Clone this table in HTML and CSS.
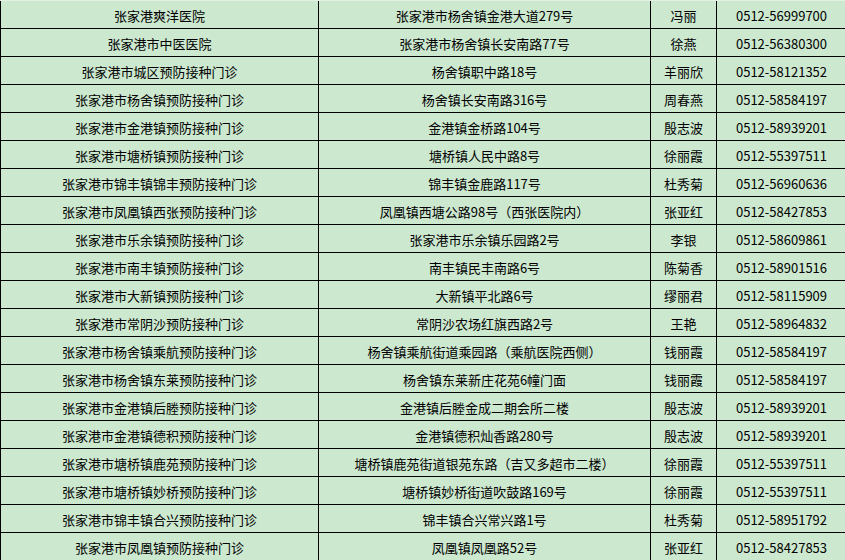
FILE: index.html
```html
<!DOCTYPE html>
<html lang="zh-CN">
<head>
<meta charset="utf-8">
<title>张家港预防接种门诊</title>
<link rel="stylesheet" href="styles.css">
</head>
<body>
<div class="sheet">
  <div class="cell">张家港爽洋医院</div><div class="cell">张家港市杨舍镇金港大道279号</div><div class="cell">冯丽</div><div class="cell">0512-56999700</div>
  <div class="cell">张家港市中医医院</div><div class="cell">张家港市杨舍镇长安南路77号</div><div class="cell">徐燕</div><div class="cell">0512-56380300</div>
  <div class="cell">张家港市城区预防接种门诊</div><div class="cell">杨舍镇职中路18号</div><div class="cell">羊丽欣</div><div class="cell">0512-58121352</div>
  <div class="cell">张家港市杨舍镇预防接种门诊</div><div class="cell">杨舍镇长安南路316号</div><div class="cell">周春燕</div><div class="cell">0512-58584197</div>
  <div class="cell">张家港市金港镇预防接种门诊</div><div class="cell">金港镇金桥路104号</div><div class="cell">殷志波</div><div class="cell">0512-58939201</div>
  <div class="cell">张家港市塘桥镇预防接种门诊</div><div class="cell">塘桥镇人民中路8号</div><div class="cell">徐丽霞</div><div class="cell">0512-55397511</div>
  <div class="cell">张家港市锦丰镇锦丰预防接种门诊</div><div class="cell">锦丰镇金鹿路117号</div><div class="cell">杜秀菊</div><div class="cell">0512-56960636</div>
  <div class="cell">张家港市凤凰镇西张预防接种门诊</div><div class="cell">凤凰镇西塘公路98号（西张医院内）</div><div class="cell">张亚红</div><div class="cell">0512-58427853</div>
  <div class="cell">张家港市乐余镇预防接种门诊</div><div class="cell">张家港市乐余镇乐园路2号</div><div class="cell">李银</div><div class="cell">0512-58609861</div>
  <div class="cell">张家港市南丰镇预防接种门诊</div><div class="cell">南丰镇民丰南路6号</div><div class="cell">陈菊香</div><div class="cell">0512-58901516</div>
  <div class="cell">张家港市大新镇预防接种门诊</div><div class="cell">大新镇平北路6号</div><div class="cell">缪丽君</div><div class="cell">0512-58115909</div>
  <div class="cell">张家港市常阴沙预防接种门诊</div><div class="cell">常阴沙农场红旗西路2号</div><div class="cell">王艳</div><div class="cell">0512-58964832</div>
  <div class="cell">张家港市杨舍镇乘航预防接种门诊</div><div class="cell">杨舍镇乘航街道乘园路（乘航医院西侧）</div><div class="cell">钱丽霞</div><div class="cell">0512-58584197</div>
  <div class="cell">张家港市杨舍镇东莱预防接种门诊</div><div class="cell">杨舍镇东莱新庄花苑6幢门面</div><div class="cell">钱丽霞</div><div class="cell">0512-58584197</div>
  <div class="cell">张家港市金港镇后塍预防接种门诊</div><div class="cell">金港镇后塍金成二期会所二楼</div><div class="cell">殷志波</div><div class="cell">0512-58939201</div>
  <div class="cell">张家港市金港镇德积预防接种门诊</div><div class="cell">金港镇德积灿香路280号</div><div class="cell">殷志波</div><div class="cell">0512-58939201</div>
  <div class="cell">张家港市塘桥镇鹿苑预防接种门诊</div><div class="cell">塘桥镇鹿苑街道银苑东路（吉又多超市二楼）</div><div class="cell">徐丽霞</div><div class="cell">0512-55397511</div>
  <div class="cell">张家港市塘桥镇妙桥预防接种门诊</div><div class="cell">塘桥镇妙桥街道吹鼓路169号</div><div class="cell">徐丽霞</div><div class="cell">0512-55397511</div>
  <div class="cell">张家港市锦丰镇合兴预防接种门诊</div><div class="cell">锦丰镇合兴常兴路1号</div><div class="cell">杜秀菊</div><div class="cell">0512-58951792</div>
  <div class="cell">张家港市凤凰镇预防接种门诊</div><div class="cell">凤凰镇凤凰路52号</div><div class="cell">张亚红</div><div class="cell">0512-58427853</div>
</div>
</body>
</html>
```
FILE: styles.css
```css
html, body {
  margin: 0;
  padding: 0;
  background: #e4f2e6;
  overflow: hidden;
}
body {
  padding-top: 1px;
}
.sheet {
  display: grid;
  grid-template-columns: 317px 331px 65px 129px;
  grid-auto-rows: 27px;
  gap: 1px;
  padding-left: 1px;
  padding-bottom: 1px;
  width: 845px;
  background: #000;
  font-family: "Noto Sans CJK SC", "Noto Sans", sans-serif;
  font-size: 13px;
  color: #000;
}
.cell {
  background: #cce8cf;
  display: flex;
  align-items: center;
  justify-content: center;
  white-space: nowrap;
  line-height: 1;
  padding-top: 1px;
}
```
